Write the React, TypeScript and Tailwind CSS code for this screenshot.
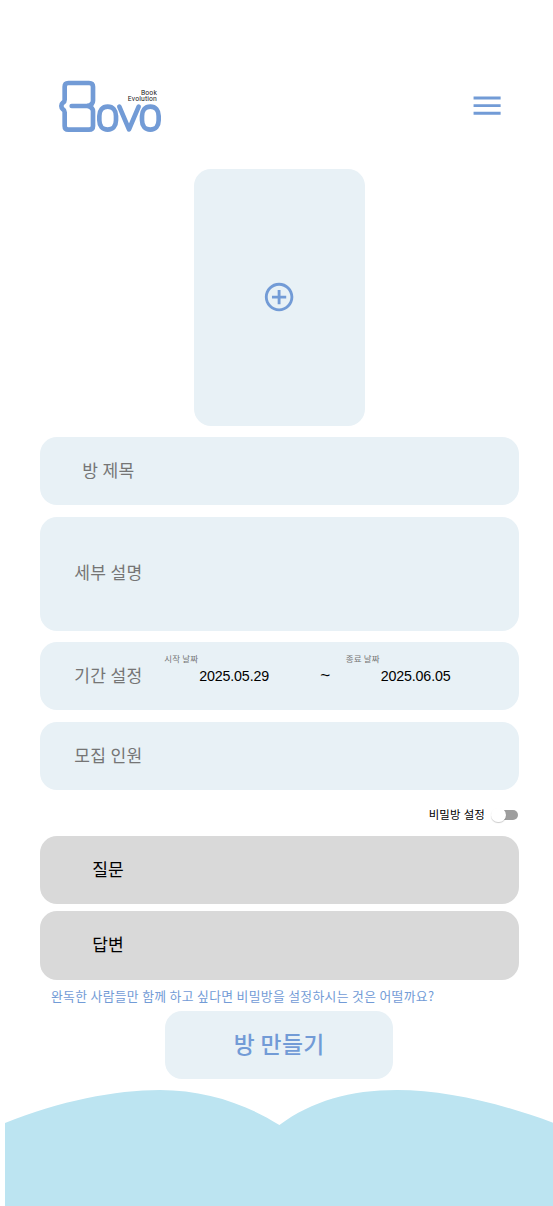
import React from "react";

function Logo() {
  return (
    <div className="relative h-[75px] w-[130px]">
      <svg className="block" width="130" height="75" viewBox="0 0 390 225" fill="none" stroke="#729bd6" strokeWidth="14" strokeLinecap="round" strokeLinejoin="round" aria-label="Bovo">
        <path d="M80 108H128Q144 104 144 92V50Q144 39 132 39H70Q59 39 59 50V89Q59 95 54 98Q49 102 49 108Q49 114 54 118Q59 121 59 127V168Q59 179 70 179H132Q144 179 144 168V124Q144 112 128 108" />
        <path d="M188 110C204 110 213 122 213 138V151C213 167 204 179 188 179C172 179 163 167 163 151V138C163 122 172 110 188 110Z" />
        <path d="M223 110L252 178L281 110" />
        <path d="M316 110C332 110 341 122 341 138V151C341 167 332 179 316 179C300 179 291 167 291 151V138C291 122 300 110 316 110Z" />
      </svg>
      <div className="absolute right-[18px] top-[19.5px] text-right font-[Roboto,sans-serif] text-[6.8px] leading-[6px] tracking-[0.15px] text-[#222]">
        Book
        <br />
        Evolution
      </div>
    </div>
  );
}

export default function App() {
  return (
    <main className="relative flex h-[1206px] w-[553px] flex-col overflow-hidden bg-white font-['Noto_Sans_CJK_KR',sans-serif] text-[17.1px] leading-6 text-[#757575]">
      <header className="flex h-[169px] shrink-0 items-start justify-between pl-[45px] pr-[48.6px] pt-[70px]">
        <Logo />
        <button className="mt-[19px]" aria-label="메뉴">
          <svg className="block" width="34.2" height="34.2" viewBox="0 0 24 24" fill="#729bd6">
            <path d="M2.5 18h19v-2h-19zm0-5.33h19v-2h-19zM2.5 5.33v2h19v-2z" />
          </svg>
        </button>
      </header>

      <div className="ml-[39.8px] flex w-[478.8px] flex-1 flex-col items-center">
        <button className="flex h-[256.5px] w-[171px] shrink-0 items-center justify-center rounded-[17px] bg-[#e8f1f6]" aria-label="표지 추가">
          <svg width="34.2" height="34.2" viewBox="0 0 24 24" fill="#729bd6">
            <path d="M13 7h-2v4H7v2h4v4h2v-4h4v-2h-4zm-1-5C6.48 2 2 6.48 2 12s4.48 10 10 10 10-4.48 10-10S17.52 2 12 2m0 18c-4.41 0-8-3.59-8-8s3.59-8 8-8 8 3.59 8 8-3.59 8-8 8" />
          </svg>
        </button>

        <div className="mt-[11.4px] flex h-[68.4px] w-full shrink-0 items-center rounded-[17px] bg-[#e8f1f6] pb-[2px] pl-[42.4px]">
          <span className="tracking-[0.35px]">방 제목</span>
        </div>
        <div className="mt-[11.4px] flex h-[114px] w-full shrink-0 items-center rounded-[17px] bg-[#e8f1f6] pb-[4px] pl-[34.4px]">
          <span className="tracking-[0.35px]">세부 설명</span>
        </div>
        <div className="mt-[11.4px] flex h-[68.4px] w-full shrink-0 items-center rounded-[17px] bg-[#e8f1f6] pl-[34.4px]">
          <span className="w-[90px] pb-[2px] tracking-[0.35px]">기간 설정</span>
          <div className="flex h-full w-[156px] flex-col pt-[10px]">
            <span className="text-[8.5px] leading-3 tracking-[0.2px]">시작 날짜</span>
            <span className="pl-[35px] pt-px font-['Liberation_Sans',sans-serif] text-[14.25px] leading-[23px] tracking-[-0.15px] text-black">2025.05.29</span>
          </div>
          <span className="w-[25.5px] font-['Liberation_Sans',sans-serif] text-[17.1px] text-black">~</span>
          <div className="flex h-full flex-col pt-[10px]">
            <span className="text-[8.5px] leading-3 tracking-[0.2px]">종료 날짜</span>
            <span className="pl-[35px] pt-px font-['Liberation_Sans',sans-serif] text-[14.25px] leading-[23px] tracking-[-0.15px] text-black">2025.06.05</span>
          </div>
        </div>
        <div className="mt-[11.4px] flex h-[68.4px] w-full shrink-0 items-center rounded-[17px] bg-[#e8f1f6] pb-[2px] pl-[34.4px]">
          <span className="tracking-[0.35px]">모집 인원</span>
        </div>

        <div className="flex h-[45.7px] w-full shrink-0 items-center justify-end pt-[4px]">
          <span className="pb-[2px] text-[11.4px] tracking-[0.25px] text-black">비밀방 설정</span>
          <div className="ml-[7px] mr-[0.5px] flex h-[10px] w-[26px] items-center rounded-[5px] bg-[#9e9e9e]">
            <span className="-ml-px size-[14.5px] rounded-full bg-white shadow-[0_1px_1px_rgba(0,0,0,0.2)]" />
          </div>
        </div>

        <div className="flex h-[68.4px] w-full shrink-0 items-center rounded-[17px] bg-[#d9d9d9] pb-[2px] pl-[52.4px] tracking-[0.2px] text-black">질문</div>
        <div className="mt-[6.8px] flex h-[68.4px] w-full shrink-0 items-center rounded-[17px] bg-[#d9d9d9] pb-[3px] pl-[52.4px] tracking-[0.2px] text-black">답변</div>
        <p className="flex h-[31.5px] w-full shrink-0 items-center whitespace-nowrap pl-[11.2px] pt-px text-[12.8px] tracking-[0.34px] text-[#729bd6]">완독한 사람들만 함께 하고 싶다면 비밀방을 설정하시는 것은 어떨까요?</p>
        <button className="flex h-[68.4px] w-[228px] shrink-0 items-center justify-center rounded-[17px] bg-[#e8f1f6] pb-[2px] text-[22.8px] font-medium tracking-[0.4px] text-[#729bd6]">방 만들기</button>
      </div>

      <svg className="ml-[5px] block h-[117px] w-[548px] shrink-0" viewBox="5 1089 548 117" fill="#bce4f1">
        <path d="M4.8 1123C60 1101 115 1090 160 1090C205 1090 246 1104 279.4 1125C312 1101 350 1090 397 1090C445 1090 500 1103 553 1122.7V1206H4.8Z" />
      </svg>
    </main>
  );
}
